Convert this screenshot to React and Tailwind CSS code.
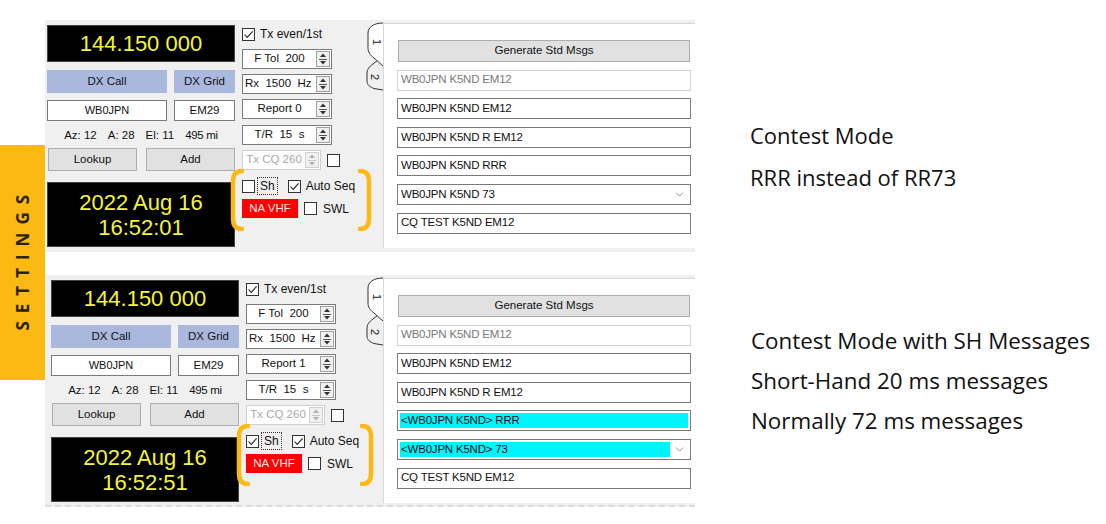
import { ChevronDown } from "lucide-react";

const Check = ({ checked, className = "" }) => (
  <div className={`w-[13px] h-[13px] shrink-0 border border-[#333] bg-white flex items-center justify-center ${className}`}>
    {checked && (
      <svg width="11" height="11" viewBox="0 0 11 11">
        <path d="M1.5 5.5 L4.2 8.4 L9.6 2.4" fill="none" stroke="#222" strokeWidth="1.1" />
      </svg>
    )}
  </div>
);

const Spinner = ({ disabled }) => (
  <div className={`w-[14px] h-[16px] border ${disabled ? "border-[#d0d0d0]" : "border-[#a0a0a0]"} bg-[#f0f0f0] flex flex-col`}>
    <div className="flex-1 flex items-center justify-center">
      <svg width="6" height="4" viewBox="0 0 6 4">
        <path d="M0 4 L3 0.5 L6 4Z" fill={disabled ? "#b0b0b0" : "#333"} />
      </svg>
    </div>
    <div className={`h-px mx-[2px] ${disabled ? "bg-[#c8c8c8]" : "bg-[#555]"}`} />
    <div className="flex-1 flex items-center justify-center">
      <svg width="6" height="4" viewBox="0 0 6 4">
        <path d="M0 0 L6 0 L3 3.5Z" fill={disabled ? "#b0b0b0" : "#333"} />
      </svg>
    </div>
  </div>
);

const Spin = ({ label, left, disabled, className = "" }) => (
  <div
    className={`h-[20px] border bg-white flex items-center pr-[1px] ${
      disabled ? "border-[#cfcfcf] text-[#a8a8a8]" : "border-[#7a7a7a] text-[#111]"
    } ${className}`}
  >
    <div className={`flex-1 whitespace-pre ${left ? "pl-[2px]" : "text-center"}`}>{label}</div>
    <Spinner disabled={disabled} />
  </div>
);

const Msg = ({ text, disabled, hl, combo }) => (
  <div
    className={`h-[21px] border bg-white flex items-center p-[2px] tracking-[-0.2px] ${
      disabled ? "border-[#d2d2d2] text-[#7a7a7a]" : "border-[#7a7a7a] text-[#111]"
    }`}
  >
    <div className={`h-full flex-1 flex items-center pl-[1px] ${hl ? "bg-[#00f4fc]" : ""}`}>{text}</div>
    {combo && (
      <div className="w-[18px] flex justify-center">
        <ChevronDown size={13} strokeWidth={1.3} color="#666" />
      </div>
    )}
  </div>
);

const Bracket = ({ right, className = "" }) => (
  <svg width="14" height="62" viewBox="0 0 14 62" className={`absolute ${className}`}>
    <path
      d={right ? "M2 2 Q11 2 11 12 L11 50 Q11 60 2 60" : "M12 2 Q3 2 3 12 L3 50 Q3 60 12 60"}
      fill="none"
      stroke="#fdb913"
      strokeWidth="4.5"
      strokeLinecap="round"
    />
  </svg>
);

const Tabs = () => (
  <svg width="18" height="72" viewBox="0 0 18 72" className="mt-[1px]">
    <path d="M17 35 L7 43 C3 46 1 48 1 53 L1 60 C1 64 4 66 8 67.5 L17 69" fill="#f0f0f0" stroke="#333" strokeWidth="1" />
    <path d="M17 2 C8 2 2 6 2 12 L2 27 C2 31 4 34 8 37 L17 45" fill="#fff" stroke="#333" strokeWidth="1" />
    <text x="7" y="21" fontSize="11" fill="#222" transform="rotate(90 7 21)" textAnchor="middle" fontFamily="Liberation Sans">1</text>
    <text x="5" y="56" fontSize="11" fill="#222" transform="rotate(90 5 56)" textAnchor="middle" fontFamily="Liberation Sans">2</text>
  </svg>
);

const Panel = ({ shift, report, sh, time, hl, brackets, dashed }) => (
  <div
    className={`relative w-[650px] h-[232px] bg-[#f0f0f0] flex items-start text-[11.5px] text-[#111] ${
      dashed ? "border-b-2 border-dashed border-[#dcdcdc]" : ""
    }`}
  >
    {/* left column */}
    <div className="w-[188px] pt-[5px] flex flex-col" style={{ marginLeft: shift }}>
      <div className="h-[37px] bg-black border border-[#444] flex items-center justify-center text-[22px] text-[#f4f43c]">
        144.150 000
      </div>
      <div className="mt-[8px] flex gap-[7px] h-[23px]">
        <div className="w-[120px] bg-[#a9b8dc] flex items-center justify-center">DX Call</div>
        <div className="flex-1 bg-[#a9b8dc] flex items-center justify-center">DX Grid</div>
      </div>
      <div className="mt-[7px] flex gap-[7px] h-[21px]">
        <div className="w-[120px] bg-white border border-[#7a7a7a] flex items-center justify-center text-[11px]">WB0JPN</div>
        <div className="flex-1 bg-white border border-[#7a7a7a] flex items-center justify-center">EM29</div>
      </div>
      <div className="mt-[7px] h-[15px] flex items-center justify-center gap-[11px] text-[11.5px]">
        <span>Az: 12</span>
        <span>A: 28</span>
        <span>El: 11</span>
        <span className="tracking-[-0.3px]">495 mi</span>
      </div>
      <div className="mt-[5px] flex gap-[9px] h-[23px] pl-[1px]">
        <div className="flex-1 bg-[#e1e1e1] border border-[#adadad] flex items-center justify-center">Lookup</div>
        <div className="flex-1 bg-[#e1e1e1] border border-[#adadad] flex items-center justify-center">Add</div>
      </div>
      <div className="mt-[11px] h-[65px] bg-black border border-[#444] flex flex-col items-center justify-center text-[22px] leading-[25px] text-[#f4f43c]">
        <span>2022 Aug 16</span>
        <span>{time}</span>
      </div>
    </div>

    {/* middle column */}
    <div className="ml-[7px] pt-[7px] flex flex-col">
      <div className="h-[14px] flex items-center gap-[5px]">
        <Check checked />
        <span className="text-[12px]">Tx even/1st</span>
      </div>
      <Spin label="F Tol  200" className="mt-[8px] w-[90px]" />
      <Spin label="Rx  1500  Hz" left className="mt-[5px] w-[90px]" />
      <Spin label={`Report ${report}`} className="mt-[5px] w-[90px]" />
      <Spin label="T/R  15  s" className="mt-[6px] w-[90px]" />
      <div className="mt-[5px] flex items-center gap-[6px]">
        <Spin label="Tx CQ 260" disabled className="w-[79px]" />
        <Check />
      </div>
      <div className="mt-[8px] h-[16px] flex items-center">
        <Check checked={sh} />
        <span className="ml-[2px] px-[2px] h-[18px] leading-[16px] border border-dotted border-[#333] text-[12px]">Sh</span>
        <Check checked className="ml-[10px]" />
        <span className="ml-[5px] text-[12px]">Auto Seq</span>
      </div>
      <div className="mt-[5px] h-[19px] flex items-center">
        <div className="w-[56px] h-full bg-[#ff0000] text-[#ffecec] flex items-center justify-center text-[11.5px]">NA VHF</div>
        <Check className="ml-[6px]" />
        <span className="ml-[6px] text-[12px]">SWL</span>
      </div>
    </div>

    <div className="flex-1" />

    {/* tabs */}
    <div className="w-[17px]">
      <Tabs />
    </div>

    {/* message area */}
    <div className="w-[312px] h-[225px] mt-[3px] bg-white border-l border-t border-[#d8d8d8] pl-[13px] pr-[4px] pt-[16px] flex flex-col gap-[7.6px] text-[11.5px]">
      <div className="h-[22px] mx-[1px] bg-[#e1e1e1] border border-[#adadad] flex items-center justify-center">
        Generate Std Msgs
      </div>
      <Msg text="WB0JPN K5ND EM12" disabled />
      <Msg text="WB0JPN K5ND EM12" />
      <Msg text="WB0JPN K5ND R EM12" />
      <Msg text={hl ? "<WB0JPN K5ND> RRR" : "WB0JPN K5ND RRR"} hl={hl} />
      <Msg text={hl ? "<WB0JPN K5ND> 73" : "WB0JPN K5ND 73"} hl={hl} combo />
      <Msg text="CQ TEST K5ND EM12" />
    </div>

    <Bracket className={brackets[0]} />
    <Bracket right className={brackets[1]} />
  </div>
);

export default function App() {
  return (
    <div
      className="w-[1106px] h-[524px] bg-white flex overflow-hidden"
      style={{ fontFamily: '"Liberation Sans", Arial, sans-serif' }}
    >
      <div className="w-[45px] shrink-0 pt-[145px]">
        <div className="h-[235px] bg-[#fdb913] flex items-center justify-center">
          <span
            className="-rotate-90 whitespace-nowrap text-[17px] font-bold tracking-[8px] text-[#2a2200] pl-[8px]"
            style={{ fontFamily: '"Open Sans", sans-serif' }}
          >
            SETTINGS
          </span>
        </div>
      </div>

      <div className="flex flex-col pt-[20px]">
        <div className="flex">
          <Panel shift="2px" report="0" time="16:52:01" brackets={["left-[185px] top-[149px]", "left-[313px] top-[149px]"]} />
          <div
            className="ml-[55px] pt-[94px] text-[22px] leading-[42px] text-[#111] whitespace-nowrap"
            style={{ fontFamily: '"Open Sans", sans-serif' }}
          >
            <div>Contest Mode</div>
            <div>RRR instead of RR73</div>
          </div>
        </div>
        <div className="flex mt-[23px]">
          <Panel
            shift="6px"
            report="1"
            sh
            hl
            dashed
            time="16:52:51"
            brackets={["left-[191px] top-[149px]", "left-[315px] top-[149px]"]}
          />
          <div
            className="ml-[56px] pt-[46px] text-[22.4px] leading-[40px] text-[#111] whitespace-nowrap"
            style={{ fontFamily: '"Open Sans", sans-serif' }}
          >
            <div>Contest Mode with SH Messages</div>
            <div>Short-Hand 20 ms messages</div>
            <div>Normally 72 ms messages</div>
          </div>
        </div>
      </div>
    </div>
  );
}
